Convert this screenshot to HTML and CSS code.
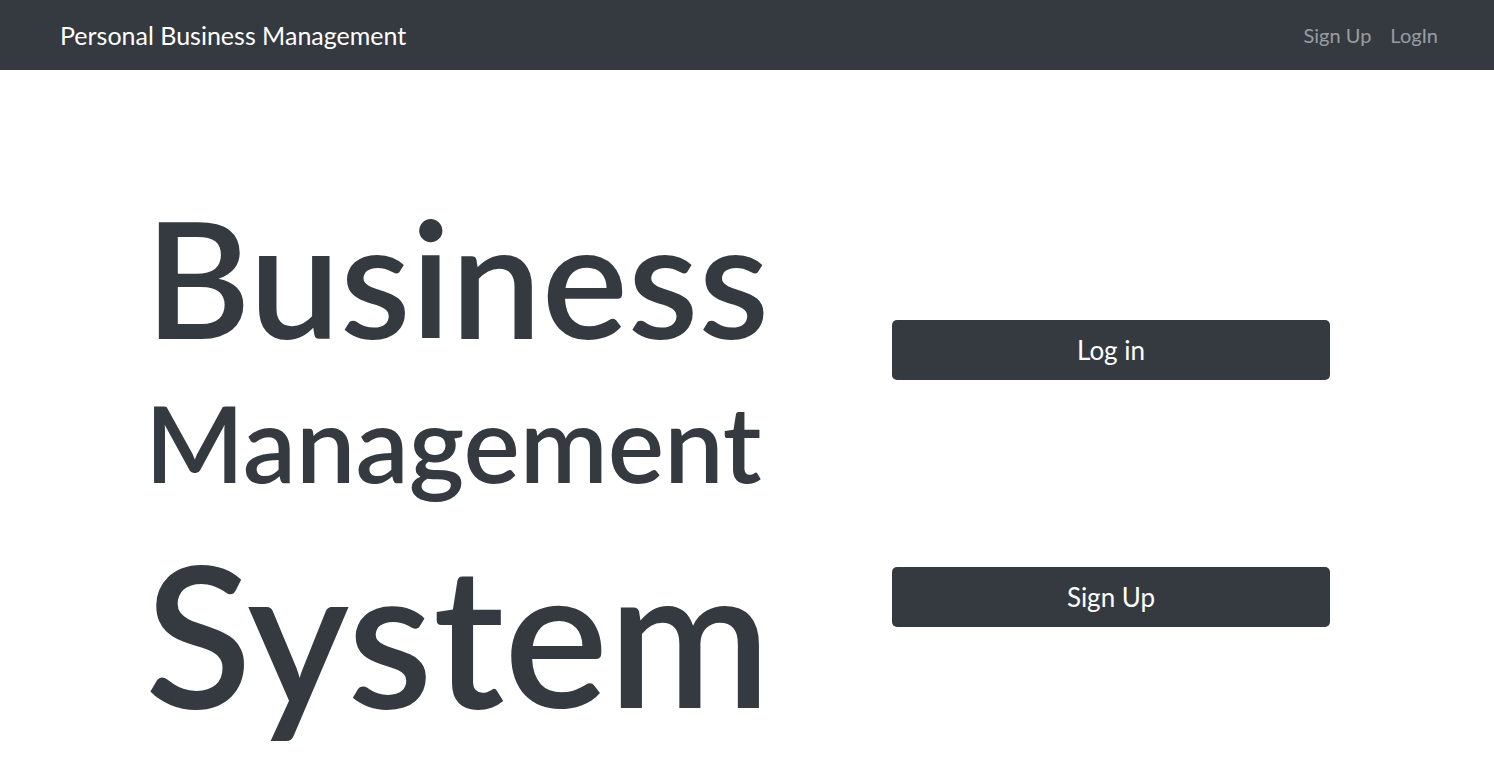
FILE: index.html
```html
<!DOCTYPE html>
<html lang="en">
<head>
<meta charset="utf-8">
<title>Personal Business Management</title>
<link rel="stylesheet" href="styles.css">
</head>
<body>
<nav class="navbar">
  <a class="brand" href="#">Personal Business Management</a>
  <div class="nav-links">
    <a class="nav-link" href="#">Sign Up</a>
    <a class="nav-link" href="#">LogIn</a>
  </div>
</nav>
<main class="hero">
  <div class="hero-title">
    <div class="word word-1">Business</div>
    <div class="word word-2">Management</div>
    <div class="word word-3">System</div>
  </div>
  <div class="hero-actions">
    <a class="btn" href="#">Log in</a>
    <a class="btn btn-second" href="#">Sign Up</a>
  </div>
</main>
</body>
</html>
```

FILE: styles.css
```css
html, body {
  margin: 0;
  padding: 0;
}
body {
  font-family: Lato, "Open Sans", sans-serif;
  color: #343a40;
  background: #fff;
  overflow: hidden;
}
a {
  text-decoration: none;
}
.navbar {
  height: 70px;
  background: #343a40;
  display: flex;
  align-items: center;
  justify-content: space-between;
  padding: 0 56px 0 60px;
}
.brand {
  color: #fff;
  font-size: 25px;
}
.nav-links {
  display: flex;
  gap: 19px;
}
.nav-link {
  color: rgba(255, 255, 255, 0.5);
  font-size: 20px;
}
.hero {
  display: flex;
  height: 705px;
}
.hero-title {
  width: 754px;
  padding-left: 145px;
  padding-top: 126px;
  box-sizing: border-box;
  font-weight: 600;
}
.word {
  line-height: 1;
  white-space: nowrap;
}
.word-1 {
  font-size: 162px;
}
.word-2 {
  font-size: 106px;
  margin-top: 31px;
}
.word-3 {
  font-size: 196px;
  margin-top: 40px;
}
.hero-actions {
  padding-left: 138px;
  padding-top: 250px;
  display: flex;
  flex-direction: column;
  gap: 187px;
}
.btn {
  width: 438px;
  height: 60px;
  display: flex;
  align-items: center;
  justify-content: center;
  background: #343a40;
  color: #fff;
  font-size: 26px;
  border-radius: 5px;
}
```
